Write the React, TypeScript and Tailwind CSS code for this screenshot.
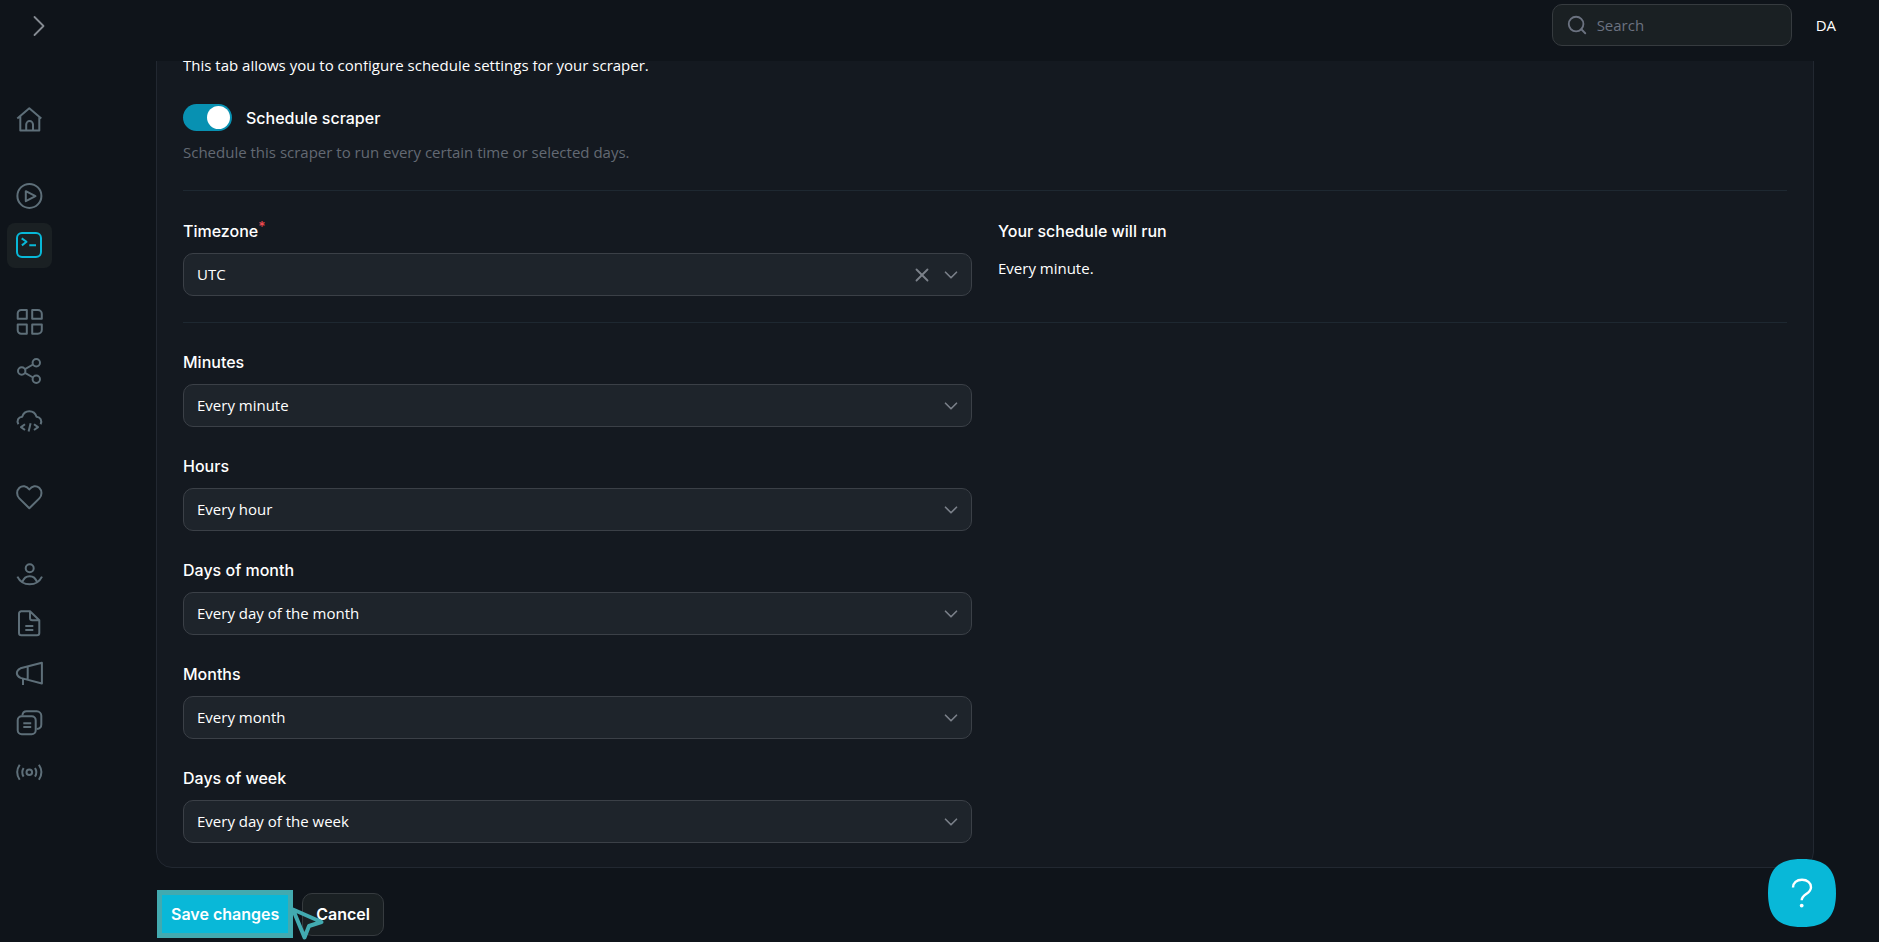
import { ReactNode, useState } from "react";
import { ChevronDown, ChevronRight, Search, X } from "lucide-react";

const navGroups: { label: string; icon: ReactNode; active?: boolean }[][] = [
	[
		{
			label: "Home",
			icon: <path d="M1.3 12.5 13.3 2.2l12 10.3M4.3 10.5v14h19v-14M10.2 24.5v-6a3.4 3.4 0 0 1 6.8 0v6" />
		}
	],
	[
		{
			label: "Runs",
			icon: (
				<>
					<circle cx="13.4" cy="13.9" r="12" />
					<path d="M9.8 9.2v10l9.7-5z" />
				</>
			)
		},
		{
			label: "Scrapers",
			active: true,
			icon: (
				<>
					<rect x="1" y="1" width="24" height="24" rx="5" />
					<path d="m5.7 6.4 4.8 3.4-4.6 3.6M13.3 13.2H20" />
				</>
			)
		}
	],
	[
		{
			label: "Integrations",
			icon: (
				<path d="M10.8 2H5.2a3.5 3.5 0 0 0-3.5 3.5v5.3h9.1zM16.2 2h5.6a4 4 0 0 1 4 4v4.8h-9.6zM10.8 16.6H1.7v5.6a3.5 3.5 0 0 0 3.5 3.5h5.6zM16.2 16.6h9.6v5.1a4 4 0 0 1-4 4h-5.6z" />
			)
		},
		{
			label: "Share",
			icon: (
				<>
					<circle cx="5.7" cy="13" r="3.7" />
					<circle cx="20.3" cy="4.7" r="3.7" />
					<circle cx="20.3" cy="21.3" r="3.7" />
					<path d="m9 11.1 8-4.6M9 14.9l8 4.6" />
				</>
			)
		},
		{
			label: "API",
			icon: (
				<path d="M2.4 16.3C.4 12.8 2.2 9 6.2 8.7 7.3 5 10 3.2 13.3 3.2S19.4 5 20.5 8.7c4 .3 5.8 4.1 4.1 7.6M9 16.2l-4 2.9 4 2.9M14.6 15.2l-2 8.3M18 16.2l4 2.9-4 2.9" />
			)
		}
	],
	[
		{
			label: "Favorites",
			icon: (
				<path d="M13.3 24.3 3.3 14.4c-3-3.1-2.8-7.8.1-10.6 2.9-2.6 7.2-2.1 9.9 1.7 2.7-3.8 7-4.3 9.9-1.7 2.9 2.8 3.1 7.5.1 10.6z" />
			)
		}
	],
	[
		{
			label: "Account",
			icon: (
				<path d="M13.7 4.3a4 4 0 1 1 0 8 4 4 0 1 1 0-8zM1.4 16.6c5 10.2 19.6 10.2 24.6 0M6.4 22c1.2-3.6 4-5.8 7.3-5.8s6 2.2 7.2 5.8" />
			)
		},
		{
			label: "Invoices",
			icon: (
				<path d="M14 1.3H5.3A2.3 2.3 0 0 0 3 3.6v19.4a2.3 2.3 0 0 0 2.3 2.3H21a2.3 2.3 0 0 0 2.3-2.3V10.3zM14 1.3v6.7a2.3 2.3 0 0 0 2.3 2.3h7M9.3 16h8M9.3 20h8" />
			)
		},
		{
			label: "Announcements",
			icon: <path d="M25.9 2.7v20.8L4.5 17.9C-.4 15.6-.4 10.5 4.5 8.3zM11.7 6.5v13M7 18.5V25" />
		},
		{
			label: "Documents",
			icon: (
				<>
					<rect x="1.7" y="6.2" width="18" height="18" rx="4" />
					<path d="M6.4 5.5c.2-2.7 1.6-4.2 4.2-4.2h10.2a4.5 4.5 0 0 1 4.5 4.5v8.7c0 2.6-1.6 4.2-4.6 4.5M7.3 13.2h7.9M7.3 17h7.9" />
				</>
			)
		},
		{
			label: "Status",
			icon: (
				<>
					<circle cx="13.3" cy="12.3" r="2.8" />
					<path d="M7.6 8c-1.7 2.7-1.7 5.9 0 8.6M19 8c1.7 2.7 1.7 5.9 0 8.6M3.7 4.8c-3.2 4.7-3.2 10.3 0 15M22.9 4.8c3.2 4.7 3.2 10.3 0 15" />
				</>
			)
		}
	]
];

const scheduleFields = [
	{ id: "minutes", label: "Minutes", value: "Every minute" },
	{ id: "hours", label: "Hours", value: "Every hour" },
	{ id: "days-of-month", label: "Days of month", value: "Every day of the month" },
	{ id: "months", label: "Months", value: "Every month" },
	{ id: "days-of-week", label: "Days of week", value: "Every day of the week" }
];

interface SelectFieldProps {
	id: string;
	label: string;
	value: string;
	required?: boolean;
	clearable?: boolean;
}

const SelectField = ({ id, label, value, required, clearable }: SelectFieldProps) => (
	<div>
		<label className="flex h-6 items-center font-[Inter,sans-serif] text-base font-medium" htmlFor={id}>
			{label}
			{required && <span className="self-start text-sm leading-4 text-[#f04a50]">*</span>}
		</label>
		<div className="relative mt-[10px]">
			<select
				className="block h-[43px] w-full appearance-none rounded-[10px] border border-[#3b4047] bg-[#1e242b] px-[13px] text-[15px] text-white focus:border-cyan-500 focus:outline-none"
				id={id}
				defaultValue={value}
			>
				<option>{value}</option>
			</select>
			<div className="pointer-events-none absolute inset-y-0 right-[10px] flex items-center gap-[7px] text-[#7b818a]">
				{clearable && (
					<button type="button" aria-label="Clear" className="pointer-events-auto">
						<X size={22} strokeWidth={2} />
					</button>
				)}
				<ChevronDown size={22} strokeWidth={1.8} />
			</div>
		</div>
	</div>
);

const Sidebar = () => (
	<nav className="flex w-[156px] shrink-0 flex-col pl-[7px]">
		<button type="button" aria-label="Expand menu" className="mt-2 ml-[14px] self-start text-[#858b92]">
			<ChevronRight size={36} strokeWidth={1.2} />
		</button>
		<div className="mt-[53px] flex flex-col gap-[31px]">
			{navGroups.map((group, i) => (
				<div className="flex flex-col gap-[5px]" key={i}>
					{group.map(item => (
						<a
							className={
								item.active
									? "flex size-[45px] items-center justify-center rounded-lg bg-[#1a2023] text-[#08b8d8]"
									: "flex size-[45px] items-center justify-center rounded-lg text-[#5e6f79]"
							}
							href="#"
							key={item.label}
							aria-label={item.label}
						>
							<svg
								className="size-[27px] overflow-visible"
								viewBox="0 0 27 27"
								fill="none"
								stroke="currentColor"
								strokeWidth="2"
								strokeLinejoin="round"
							>
								{item.icon}
							</svg>
						</a>
					))}
				</div>
			))}
		</div>
	</nav>
);

export default function App() {
	const [enabled, setEnabled] = useState(true);

	return (
		<div className="flex h-screen overflow-hidden bg-[#0f141a] font-['Open_Sans','Noto_Sans',sans-serif] text-[15px] text-white">
			<Sidebar />
			<div className="flex min-w-0 flex-1 flex-col">
				<header className="flex h-[61px] shrink-0 items-start justify-end gap-6 pt-1 pr-[43px]">
					<label className="flex h-[42px] w-60 items-center gap-[9px] rounded-[10px] border border-[#363b3f] bg-[#1a2023] px-[13px] text-[#6b7280]">
						<Search size={22} strokeWidth={2} className="shrink-0" />
						<input
							className="w-full min-w-0 bg-transparent text-white placeholder:text-[#6b7280] focus:outline-none"
							type="search"
							placeholder="Search"
							aria-label="Search"
						/>
					</label>
					<button type="button" className="h-[42px]">DA</button>
				</header>

				<main className="min-h-0 flex-1 overflow-hidden pr-[65px]">
					<form onSubmit={event => event.preventDefault()}>
						<section className="-mt-[33px] rounded-2xl border border-[#222831] bg-[#141920] px-[26px] pt-6 pb-6">
							<p className="leading-6">This tab allows you to configure schedule settings for your scraper.</p>

							<label className="mt-[27px] flex h-[27px] items-center gap-[14px] font-[Inter,sans-serif] text-base font-medium">
								<input
									className="peer sr-only"
									type="checkbox"
									role="switch"
									checked={enabled}
									onChange={() => setEnabled(!enabled)}
								/>
								<span className="flex h-[27px] w-[49px] items-center rounded-full bg-gray-600 px-[2px] peer-checked:justify-end peer-checked:bg-[#0891b2]">
									<span className="size-[23px] rounded-full bg-white" />
								</span>
								Schedule scraper
							</label>
							<p className="mt-[9px] leading-6 text-[#636973]">
								Schedule this scraper to run every certain time or selected days.
							</p>

							<hr className="mt-[26px] border-[#1e2831]" />

							<div className="mt-7 grid grid-cols-2 gap-[26px]">
								<SelectField id="timezone" label="Timezone" value="UTC" required clearable />
								<div>
									<h3 className="font-[Inter,sans-serif] text-base leading-6 font-medium">Your schedule will run</h3>
									<p className="mt-[13px] leading-6">Every minute.</p>
								</div>
							</div>

							<hr className="mt-[26px] border-[#1e2831]" />

							<div className="mt-[27px] grid grid-cols-2 gap-[26px]">
								<div className="flex flex-col gap-[27px]">
									{scheduleFields.map(field => (
										<SelectField key={field.id} {...field} />
									))}
								</div>
							</div>
						</section>

						<div className="mt-[22px] flex items-center gap-[9px] font-[Inter,sans-serif] text-base font-semibold">
							<div className="relative ml-px border-[5px] border-[#42aab0]">
								<button type="submit" className="block h-[38px] bg-[#09b8d8] px-[9px]">
									Save changes
								</button>
								<svg
									className="absolute top-[10px] left-[125px] z-10 h-9 w-9 overflow-visible"
									viewBox="0 0 36 36"
									fill="none"
									stroke="#42aab0"
									strokeWidth="4"
									strokeLinejoin="round"
								>
									<path d="M6 4.5 17.5 32.500 22 21 34.500 17z" />
								</svg>
							</div>
							<button type="button" className="h-[43px] rounded-[10px] border border-[#363b3f] bg-[#1a2023] px-[13px]">
								Cancel
							</button>
						</div>
					</form>
				</main>
			</div>

			<button type="button" aria-label="Help" className="fixed right-[43px] bottom-[15px] size-[68px]">
				<svg viewBox="0 0 68 68" fill="none">
					<path d="M34 0C58 0 68 10 68 34S58 68 34 68 0 58 0 34 10 0 34 0z" fill="#08b8d8" />
					<path d="M25 28.5c0-4.5 3.6-7.7 9-7.7 5.3 0 9 3 9 7.4 0 7-9.3 6.6-9.3 13" stroke="white" strokeWidth="2.4" />
					<circle cx="33.7" cy="46.6" r="1.9" fill="white" />
				</svg>
			</button>
		</div>
	);
}
